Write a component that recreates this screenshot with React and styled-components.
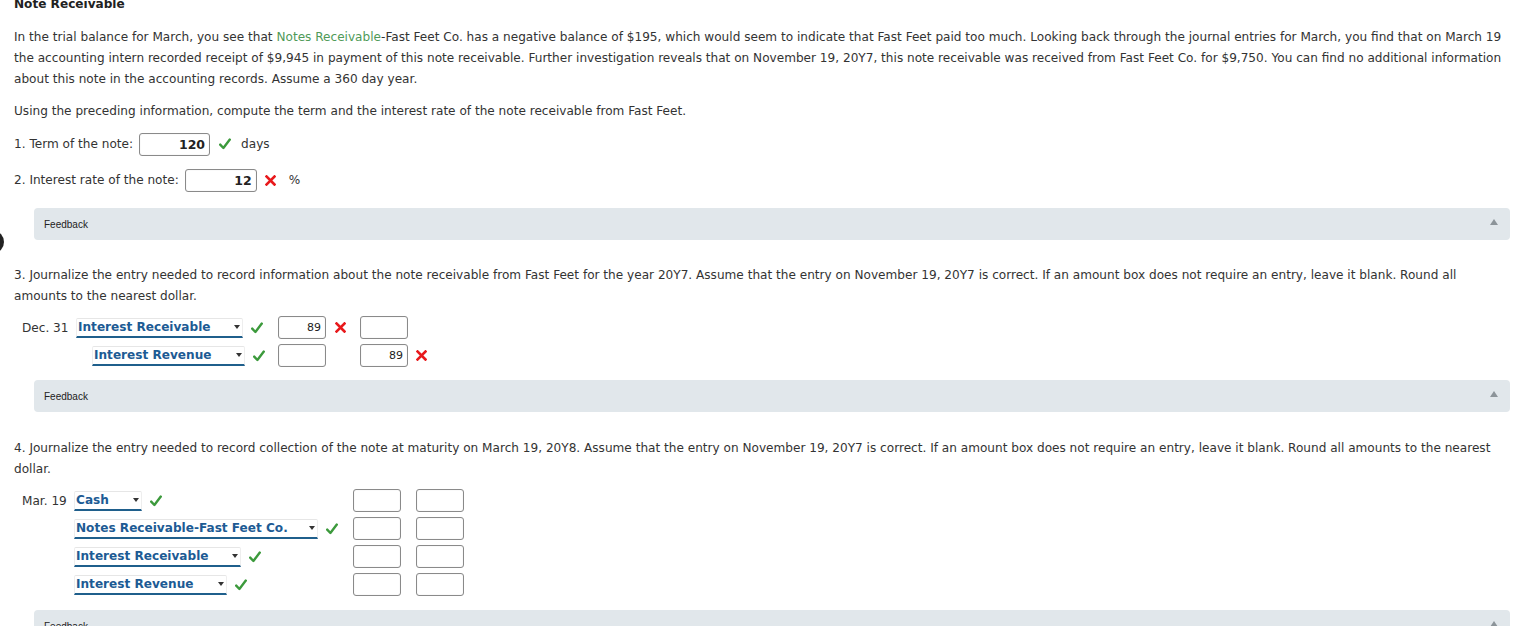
import React from "react";
import styled, { createGlobalStyle } from "styled-components";

const Global = createGlobalStyle`
  html, body { margin: 0; padding: 0; background: #fff; }
  body { font-family: "DejaVu Sans", Verdana, sans-serif; font-size: 12.1px; color: #333; overflow: hidden; }
`;

const Page = styled.div`
  position: relative;
  padding: 0 6px 0 14px;
  width: 1496px;
  height: 626px;
  overflow: hidden;
`;

const EdgeMark = styled.div`
  position: absolute;
  left: -16px;
  top: 231px;
  width: 20px;
  height: 22px;
  border-radius: 50%;
  background: #222;
`;

const Title = styled.div`
  font-weight: bold;
  font-size: 12.1px;
  margin-top: -6px;
  line-height: 20px;
  color: #222;
`;

const Para = styled.p`
  margin: ${(p) => p.$mt || 0}px 0 0 0;
  line-height: 21px;
  width: 1492px;
`;

const Green = styled.span`
  color: #4f9a58;
`;

const QRow = styled.div`
  display: flex;
  align-items: center;
  margin-top: ${(p) => p.$mt}px;
  height: 24px;
`;

const Input = styled.div`
  box-sizing: border-box;
  width: ${(p) => p.$w}px;
  height: 23px;
  border: 1px solid #8a8a8a;
  border-radius: 3px;
  box-shadow: inset 0 0 1px rgba(0,0,0,0.2);
  background: #fff;
  display: flex;
  align-items: center;
  justify-content: flex-end;
  padding-right: 4px;
  font-size: ${(p) => (p.$small ? 11 : 12.5)}px;
  font-weight: ${(p) => (p.$bold ? "bold" : "normal")};
  color: #222;
  margin-left: ${(p) => p.$ml || 0}px;
  flex-shrink: 0;
`;

const Mark = styled.span`
  display: inline-flex;
  align-items: center;
  margin-left: ${(p) => p.$ml || 0}px;
  width: 12px;
  height: 14px;
  flex-shrink: 0;
`;

const Unit = styled.span`
  margin-left: ${(p) => p.$ml}px;
`;

const FeedbackBar = styled.div`
  margin: ${(p) => p.$mt}px 0 0 20px;
  width: 1476px;
  height: 32px;
  background: #e1e7eb;
  border-radius: 4px;
  display: flex;
  align-items: center;
  justify-content: space-between;
  padding: 0 12px 0 10px;
  box-sizing: border-box;
  font-family: "Liberation Sans", Arial, sans-serif;
  font-size: 10px;
  color: #222;
`;

const Tri = styled.span`
  width: 0;
  height: 0;
  border-left: 4px solid transparent;
  border-right: 4px solid transparent;
  border-bottom: 6px solid #8c9499;
  margin-top: -4px;
`;

const Journal = styled.div`
  display: flex;
  flex-direction: column;
  gap: 5px;
  margin-top: ${(p) => p.$mt}px;
  padding-left: 8px;
`;

const JRow = styled.div`
  display: flex;
  align-items: center;
  height: 23px;
`;

const DateCell = styled.div`
  width: ${(p) => p.$w}px;
  flex-shrink: 0;
`;

const AccountCell = styled.div`
  box-sizing: border-box;
  width: ${(p) => p.$w}px;
  padding-left: ${(p) => p.$indent || 0}px;
  flex-shrink: 0;
  display: flex;
  align-items: center;
`;

const Select = styled.div`
  box-sizing: border-box;
  width: ${(p) => p.$w}px;
  height: 20px;
  display: flex;
  align-items: center;
  justify-content: space-between;
  padding: 0 2px 0 1px;
  border-top: 1px solid #e6e6e6;
  border-left: 1px solid #eee;
  border-right: 1px solid #eee;
  border-bottom: 2px solid #1f5f8c;
  border-radius: 2px 2px 0 0;
  color: #1d5b94;
  font-weight: bold;
  font-size: 12.1px;
  white-space: nowrap;
  flex-shrink: 0;
`;

const Caret = styled.span`
  width: 0;
  height: 0;
  border-left: 3.5px solid transparent;
  border-right: 3.5px solid transparent;
  border-top: 4px solid #333;
`;

const Cols = styled.div`
  display: flex;
  align-items: center;
`;

const Check = ({ ml }) => (
  <Mark $ml={ml}>
    <svg width="12" height="12" viewBox="0 0 12 12">
      <path d="M1.2 6.6 L4.4 10 L10.8 1.6" fill="none" stroke="#3c9a3c" strokeWidth="2.4" strokeLinecap="round" strokeLinejoin="round" />
    </svg>
  </Mark>
);

const Cross = ({ ml }) => (
  <Mark $ml={ml}>
    <svg width="11" height="11" viewBox="0 0 11 11">
      <path d="M1.5 1.5 L9.5 9.5 M9.5 1.5 L1.5 9.5" fill="none" stroke="#e8191c" strokeWidth="2.6" strokeLinecap="square" />
    </svg>
  </Mark>
);

const Blank = styled.span`
  display: inline-block;
  width: ${(p) => p.$w}px;
  flex-shrink: 0;
`;

const rows4 = [
  { date: "Mar. 19", name: "Cash", w: 68 },
  { date: "", name: "Notes Receivable-Fast Feet Co.", w: 244 },
  { date: "", name: "Interest Receivable", w: 167 },
  { date: "", name: "Interest Revenue", w: 153 },
];

export default function App() {
  return (
    <>
      <Global />
      <Page>
        <EdgeMark />
        <Title>Note Receivable</Title>
        <Para $mt={13}>
          In the trial balance for March, you see that <Green>Notes Receivable</Green>-Fast Feet Co. has a negative balance of $195, which would seem to indicate that Fast Feet paid too much. Looking back through the journal entries for March, you find that on March 19 the accounting intern recorded receipt of $9,945 in payment of this note receivable. Further investigation reveals that on November 19, 20Y7, this note receivable was received from Fast Feet Co. for $9,750. You can find no additional information about this note in the accounting records. Assume a 360 day year.
        </Para>
        <Para $mt={11}>Using the preceding information, compute the term and the interest rate of the note receivable from Fast Feet.</Para>
        <QRow $mt={10}>
          <span>1. Term of the note:</span>
          <Input $w={71} $bold $ml={6}>120</Input>
          <Check ml={9} />
          <Unit $ml={10}>days</Unit>
        </QRow>
        <QRow $mt={12}>
          <span>2. Interest rate of the note:</span>
          <Input $w={72} $bold $ml={6}>12</Input>
          <Cross ml={8} />
          <Unit $ml={12}>%</Unit>
        </QRow>
        <FeedbackBar $mt={16}>
          <span>Feedback</span>
          <Tri />
        </FeedbackBar>
        <Para $mt={25}>
          3. Journalize the entry needed to record information about the note receivable from Fast Feet for the year 20Y7. Assume that the entry on November 19, 20Y7 is correct. If an amount box does not require an entry, leave it blank. Round all amounts to the nearest dollar.
        </Para>
        <Journal $mt={9}>
          <JRow>
            <DateCell $w={54}>Dec. 31</DateCell>
            <AccountCell $w={202}>
              <Select $w={167}>Interest Receivable<Caret /></Select>
              <Check ml={8} />
            </AccountCell>
            <Cols>
              <Input $w={48} $small>89</Input>
              <Cross ml={9} />
              <Input $w={48} $ml={13} />
            </Cols>
          </JRow>
          <JRow>
            <DateCell $w={54}></DateCell>
            <AccountCell $w={202} $indent={16}>
              <Select $w={153}>Interest Revenue<Caret /></Select>
              <Check ml={8} />
            </AccountCell>
            <Cols>
              <Input $w={48} />
              <Blank $w={21} />
              <Input $w={48} $ml={13} $small>89</Input>
              <Cross ml={8} />
            </Cols>
          </JRow>
        </Journal>
        <FeedbackBar $mt={13}>
          <span>Feedback</span>
          <Tri />
        </FeedbackBar>
        <Para $mt={26}>
          4. Journalize the entry needed to record collection of the note at maturity on March 19, 20Y8. Assume that the entry on November 19, 20Y7 is correct. If an amount box does not require an entry, leave it blank. Round all amounts to the nearest dollar.
        </Para>
        <Journal $mt={9}>
          {rows4.map((r) => (
            <JRow key={r.name}>
              <DateCell $w={52}>{r.date}</DateCell>
              <AccountCell $w={279}>
                <Select $w={r.w}>{r.name}<Caret /></Select>
                <Check ml={8} />
              </AccountCell>
              <Cols>
                <Input $w={48} />
                <Input $w={48} $ml={15} />
              </Cols>
            </JRow>
          ))}
        </Journal>
        <FeedbackBar $mt={14}>
          <span>Feedback</span>
          <Tri />
        </FeedbackBar>
      </Page>
    </>
  );
}
